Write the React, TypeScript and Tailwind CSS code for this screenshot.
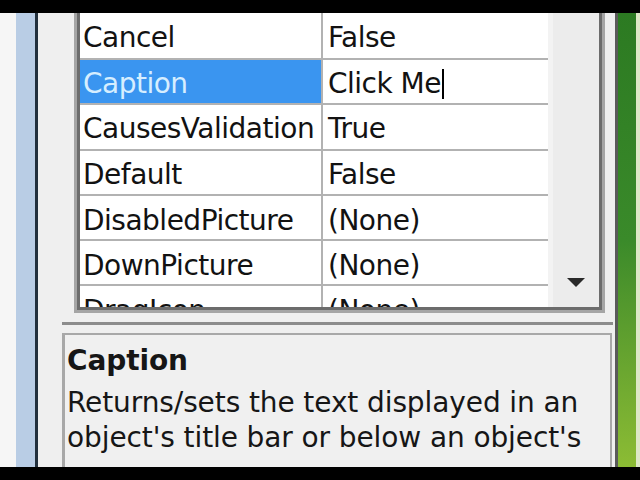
import React from 'react'

const rows: [string, string][] = [
  ['Cancel', 'False'],
  ['Caption', 'Click Me'],
  ['CausesValidation', 'True'],
  ['Default', 'False'],
  ['DisabledPicture', '(None)'],
  ['DownPicture', '(None)'],
  ['DragIcon', '(None)'],
  ['DragMode', '0 - vbManual'],
]

function Row({ name, value, index }: { name: string; value: string; index: number }) {
  const selected = name === 'Caption'
  const h = index === 0 ? 'h-[47px]' : 'h-[45.3px]'
  const pad = index < 3 ? 'pt-[4px]' : 'pt-[6px]'
  return (
    <div className={`flex shrink-0 border-b-2 border-[#b2b2b2] ${h}`}>
      <div
        className={`w-[241px] shrink-0 flex items-center pl-[3px] ${pad} ${selected ? 'bg-[#3a95f0] text-[#d6eeff]' : 'text-[#121212]'}`}
      >
        {name}
      </div>
      <div className="w-[2px] shrink-0 bg-[#b2b2b2]" />
      <div className={`flex-1 flex items-center pl-[5px] ${pad} text-[#121212]`}>
        {value}
        {selected && <span className="ml-[1px] w-[2px] h-[30px] bg-black" />}
      </div>
    </div>
  )
}

export default function App() {
  return (
    <div className="w-[640px] h-[480px] bg-black flex flex-col overflow-hidden font-['DejaVu_Sans',sans-serif] text-[28px] tracking-[-0.5px]">
      <div className="h-[13px] shrink-0" />
      <div className="flex h-[454px] shrink-0">
        <div className="w-[16px] bg-[#f6f6f6]" />
        <div className="w-[19px] bg-[#b9cde5]" />
        <div className="w-[3px] bg-[#22303d]" />
        <div className="w-[577px] bg-[#efefef] flex flex-col">
          {/* property grid */}
          <div className="ml-[36px] w-[531px] h-[300px] shrink-0 border-x-[3px] border-b-[3px] border-[#a5a5a5]">
            <div className="h-full border-x-[3px] border-b-[3px] border-[#6c6c6c] flex">
              <div className="w-[468px] bg-white flex flex-col overflow-hidden">
                {rows.map((r, i) => (
                  <Row key={r[0]} name={r[0]} value={r[1]} index={i} />
                ))}
              </div>
              <div className="flex-1 bg-[#ececec] border-l-[5px] border-[#f3f3f3] flex flex-col justify-end items-center pb-[19px]">
                <svg width="20" height="11" viewBox="0 0 20 11">
                  <path d="M1 1 L19 1 L10 10 Z" fill="#2a2a2a" />
                </svg>
              </div>
            </div>
          </div>
          {/* splitter */}
          <div className="mt-[9px] ml-[24px] w-[551px] h-[3px] bg-[#8c8c8c] shrink-0" />
          {/* description */}
          <div className="mt-[8px] ml-[24px] w-[550px] flex-1 border-t-2 border-l-[3px] border-r-2 border-[#a8a8a8] bg-[#f0f0f0] pl-[2px] pt-[6px] text-[#161616] tracking-[-0.1px]">
            <div className="font-bold leading-[40px]">Caption</div>
            <div className="leading-[35px] mt-[4px]">
              Returns/sets the text displayed in an
              <br />
              object's title bar or below an object's
            </div>
          </div>
        </div>
        <div className="w-[3px] bg-[#5a5a5a]" />
        <div className="w-[18px] bg-gradient-to-b from-[#2c7a22] via-[#3a8a2a] to-[#8cbc34]" />
        <div className="w-[4px] bg-[#dde8c6]" />
      </div>
      <div className="flex-1" />
    </div>
  )
}
